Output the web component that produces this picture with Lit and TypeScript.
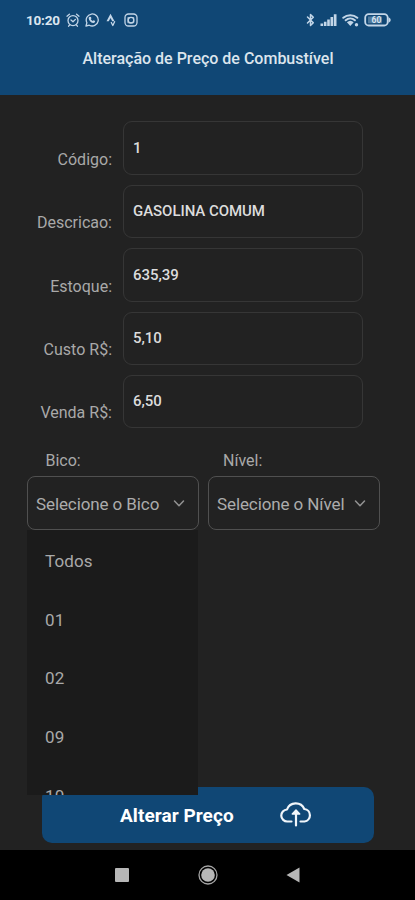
import { LitElement, html, css } from "lit";
import { customElement, property } from "lit/decorators.js";

@customElement("status-bar")
class StatusBar extends LitElement {
  static styles = css`
    :host { display: flex; height: 39px; box-sizing: border-box; padding: 0 24px 0 26px; align-items: center; color: #c3d6e8; }
    .time { font: 700 13.500px/18px Roboto, sans-serif; letter-spacing: -0.200px; width: 35px; white-space: nowrap; color: #dbe6f0; }
    .left { display: flex; align-items: center; gap: 5px; flex: 1; }
    .right { display: flex; align-items: center; gap: 5px; }
    svg { display: block; fill: none; stroke: currentColor; stroke-width: 1.3; stroke-linecap: round; stroke-linejoin: round; }
    .solid { fill: currentColor; stroke: none; }
    .num { font: 700 8.500px Roboto, sans-serif; fill: #d8e5f0; stroke: none; }
  `;
  render() {
    return html`
      <div class="left">
        <span class="time">10:20</span>
        <svg width="14" height="14" viewBox="0 0 14 14"><circle cx="7" cy="7.6" r="5" /><path d="M1 3.2 3.4 1.2M13 3.2 10.6 1.2M5 7l2 1.8L9.4 6.4M3.6 12l-1 1.2M10.4 12l1 1.2" /></svg>
        <svg width="14" height="14" viewBox="0 0 14 14"><path d="M1 13l.9-3.3A6 6 0 1 1 4.300 12.200Z" /><path class="solid" d="M4.800 3.700 6 4l.4 1.500-.6.8c.5.900 1.100 1.400 2 1.800l.8-.8 1.500.8c.1 1.300-.8 2-2 1.900C5.800 9.600 3.700 7.300 3.700 5.200c0-.7.4-1.300 1.100-1.500Z" /></svg>
        <svg width="14" height="14" viewBox="0 0 14 14"><path class="solid" d="M6.500.8 2.500 8.300h2.300l1.700-3.200 1.700 3.200h2.300Z" /><path d="M7.300 9.500 8.800 12.500 10.600 8.700" /></svg>
        <svg width="16" height="14" viewBox="0 0 16 14"><rect x="2" y="1" width="12" height="12" rx="3.500" /><circle cx="8" cy="7.200" r="2.800" /><path d="M5.200 4.500h5.600v5.300H5.200Z" stroke-width=".7" /></svg>
      </div>
      <div class="right">
        <svg width="9" height="14" viewBox="0 0 9 14"><path d="M1.500 4 7.300 9.700 4.500 12.500v-11L7.300 4.300 1.500 10" stroke-width="1.500" /></svg>
        <svg width="17" height="12" viewBox="0 0 17 12"><path class="solid" d="M.5 9.500h2.600V12H.5ZM3.900 7.700h2.600V12H3.900ZM7.200 5.500h2.600V12H7.200ZM10.500 3h2.600v9h-2.600ZM13.800.3h2.700V12h-2.700Z" /></svg>
        <svg width="17" height="14" viewBox="0 0 17 14"><path d="M1.300 4.800a10.500 10.500 0 0 1 14 0M3.700 7.300a7 7 0 0 1 9.200 0" stroke-width="2" /><path class="solid" d="M8.300 13 4.900 9.300a5 5 0 0 1 6.800 0Z" /><circle class="solid" cx="14.500" cy="11.800" r="1.700" /></svg>
        <svg width="27" height="14" viewBox="0 0 27 14"><rect x="1.200" y="1.200" width="22.500" height="11.300" rx="3.500" stroke-width="1.800" /><rect x="4" y="3.500" width="14" height="6.800" class="solid" opacity=".35" /><text class="num" x="7.500" y="10">60</text><path class="solid" d="M24.500 4 26.600 6v2l-2.100 2Z" /></svg>
      </div>`;
  }
}

@customElement("form-field")
class FormField extends LitElement {
  @property() label = "";
  @property() value = "";
  static styles = css`
    :host { display: grid; grid-template-columns: 112px 240px; column-gap: 11px; height: 53.400px; }
    .label { text-align: right; font: 400 16px/20px Roboto, sans-serif; color: #a9a9a9; padding-top: 28.500px; white-space: nowrap; }
    .box { box-sizing: border-box; border: 1.500px solid #363636; border-radius: 9px; padding: 0 0 0.500px 9px; display: flex; align-items: center; font: 500 15px/20px Roboto, sans-serif; letter-spacing: -0.050px; color: #dcdcdc; white-space: nowrap; }
  `;
  render() {
    return html`<span class="label">${this.label}</span><span class="box">${this.value}</span>`;
  }
}

@customElement("select-field")
class SelectField extends LitElement {
  @property() label = "";
  @property() placeholder = "";
  @property({ attribute: false }) options: string[] = [];
  static styles = css`
    :host { display: block; position: relative; color: #a9a9a9; font: 400 16px/20px Roboto, sans-serif; white-space: nowrap; }
    .label { display: block; height: 25px; padding-left: var(--label-inset, 18.500px); }
    .box { box-sizing: border-box; height: 54px; border: 1.500px solid #505050; border-radius: 8px; padding: 2px 12px 0 8px; display: flex; align-items: center; justify-content: space-between; font-size: 17px; letter-spacing: -0.100px; color: #acacac; }
    svg { fill: none; stroke: #929292; stroke-width: 1.500; stroke-linecap: round; stroke-linejoin: round; }
    .menu { position: absolute; top: 79px; left: 0; width: 171px; height: 265px; overflow: hidden; background: #1b1b1b; z-index: 2; }
    .option { height: 58.600px; display: flex; align-items: center; padding-left: 18px; font-size: 17px; letter-spacing: 0.100px; }
    .option:first-child { margin-top: 2px; }
  `;
  render() {
    return html`
      <span class="label">${this.label}</span>
      <div class="box"><span>${this.placeholder}</span><svg width="14" height="10" viewBox="0 0 14 10"><path d="M2.500 2 7 6.800 11.500 2" /></svg></div>
      ${this.options.length ? html`<div class="menu">${this.options.map((o) => html`<div class="option">${o}</div>`)}</div>` : ""}`;
  }
}

@customElement("app-root")
class AppRoot extends LitElement {
  static styles = css`
    :host { display: flex; flex-direction: column; width: 415px; height: 900px; background: #222222; overflow: hidden; font-family: Roboto, sans-serif; }
    .header { height: 95px; background: #104775; flex: none; }
    .title { text-align: center; font: 500 16px/20px Roboto, sans-serif; color: #dce5ed; padding-left: 1px; margin-top: 10px; white-space: nowrap; }
    .form { display: flex; flex-direction: column; gap: 10px; padding-top: 26.400px; }
    .selects { display: grid; grid-template-columns: 172px 172px; gap: 9px; padding: 22.600px 0 0 27px; }
    .level { --label-inset: 15px; }
    .button { box-sizing: border-box; width: 332px; height: 56px; margin: auto 0 7px 42px; flex: none; background: #104775; border-radius: 10px; display: flex; align-items: center; padding: 2px 0 0 78px; color: #fff; font: 700 19px/24px Roboto, sans-serif; letter-spacing: 0.060px; white-space: nowrap; }
    .caption { width: 159px; }
    .cloud { fill: none; stroke: #f0f5fa; stroke-width: 2.200; stroke-linecap: round; stroke-linejoin: round; margin-top: -4px; }
    .nav { height: 50px; flex: none; background: #000; display: grid; grid-template-columns: repeat(3, 86px); justify-content: center; justify-items: center; align-items: center; }
    .nav svg { fill: #b7b7b7; }
    .back { margin-left: -2px; }
    .ring { fill: none; stroke: #a5a5a5; stroke-width: 1.300; }
  `;
  render() {
    const fields = [["Código:", "1"], ["Descricao:", "GASOLINA COMUM"], ["Estoque:", "635,39"], ["Custo R$:", "5,10"], ["Venda R$:", "6,50"]];
    return html`
      <div class="header"><status-bar></status-bar><div class="title">Alteração de Preço de Combustível</div></div>
      <div class="form">${fields.map(([l, v]) => html`<form-field .label=${l} .value=${v}></form-field>`)}</div>
      <div class="selects">
        <select-field label="Bico:" placeholder="Selecione o Bico" .options=${["Todos", "01", "02", "09", "10"]}></select-field>
        <select-field class="level" label="Nível:" placeholder="Selecione o Nível"></select-field>
      </div>
      <div class="button"><span class="caption">Alterar Preço</span>
        <svg class="cloud" width="34" height="28" viewBox="0 0 34 28"><path d="M12.500 21.500H8.500A6 6 0 0 1 8 9.500 9.300 9.300 0 0 1 25.300 9 6.300 6.300 0 0 1 25.500 21.500H21.500M17 25.500V12" /><path d="M13.300 14 17 10 20.700 14Z" fill="#f0f5fa" stroke-width="1.500" /></svg>
      </div>
      <div class="nav">
        <svg width="14" height="14" viewBox="0 0 14 14"><rect width="14" height="14" rx="1" /></svg>
        <svg width="20" height="20" viewBox="0 0 20 20"><circle class="ring" cx="10" cy="10" r="9" /><circle cx="10" cy="10" r="6.800" /></svg>
        <svg class="back" width="14" height="16" viewBox="0 0 14 16"><path d="M.5 8 13.500.5v15Z" /></svg>
      </div>`;
  }
}
